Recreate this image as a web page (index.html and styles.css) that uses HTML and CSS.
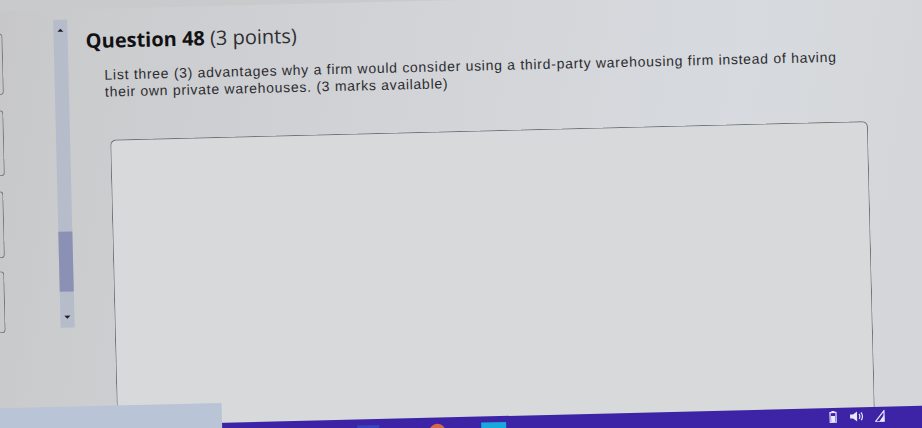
FILE: index.html
```html
<!DOCTYPE html>
<html lang="en">
<head>
<meta charset="utf-8">
<title>Question 48</title>
<link rel="stylesheet" href="styles.css">
</head>
<body>
<div class="screen">
  <div class="desk">
    <div class="cards">
      <div class="card c1"></div>
      <div class="card c2"></div>
      <div class="card c3"></div>
      <div class="card c4"></div>
    </div>
    <div class="scrollbar">
      <span class="arrow up"></span>
      <div class="track"><div class="thumb"></div></div>
      <span class="arrow down"></span>
    </div>
    <main class="question">
      <h1 class="q-title"><strong>Question 48</strong> <span class="pts">(3 points)</span></h1>
      <p class="q-text">List three (3) advantages why a firm would consider using a third-party warehousing firm instead of having their own private warehouses. (3 marks available)</p>
      <div class="answer"></div>
    </main>
  </div>
  <div class="taskbar">
    <div class="tb-apps">
      <span class="app a1"></span>
      <span class="app a2"></span>
      <span class="app a3"></span>
    </div>
    <div class="tray">
      <svg class="tray-icon" width="8" height="12" viewBox="0 0 8 12"><rect x="1" y="1.5" width="6" height="10" fill="none" stroke="#e8e8ff" stroke-width="1.2"/><rect x="2.5" y="0" width="3" height="1.5" fill="#e8e8ff"/><rect x="2" y="5" width="4" height="6" fill="#e8e8ff"/></svg>
      <svg class="tray-icon" width="14" height="12" viewBox="0 0 14 12"><path d="M1 4h3l4-3v10l-4-3H1z" fill="#e8e8ff"/><path d="M10 3.5c1 1.5 1 3.5 0 5M12 2c1.8 2.5 1.8 5.5 0 8" fill="none" stroke="#e8e8ff" stroke-width="1.2"/></svg>
      <svg class="tray-icon" width="10" height="12" viewBox="0 0 10 12"><path d="M9 1v11H0z" fill="none" stroke="#e8e8ff" stroke-width="1.2"/><path d="M9 5v7H4z" fill="#e8e8ff"/></svg>
    </div>
  </div>
  <div class="popup"></div>
</div>
</body>
</html>
```

FILE: styles.css
```css
html, body {
  margin: 0;
  padding: 0;
  width: 922px;
  height: 428px;
  overflow: hidden;
  background: #c9cacc;
}

.screen {
  position: relative;
  width: 960px;
  height: 480px;
  margin-left: -20px;
  padding-left: 20px;
  box-sizing: border-box;
  display: flex;
  flex-direction: column;
  transform: rotate(-1.4deg);
  transform-origin: 481px 214px;
  background: linear-gradient(100deg, #c6c6c7 0%, #cbccce 12%, #d2d4d8 45%, #d7dade 75%, #d3d5d8 100%);
}

.desk {
  height: 417px;
  display: flex;
  flex-direction: row;
  align-items: flex-start;
}

.cards {
  width: 4px;
  margin-left: -6px;
  display: flex;
  flex-direction: column;
  padding-top: 22px;
}

.card {
  border: 1px solid #77797c;
  border-left: none;
  border-radius: 0 4px 4px 0;
  box-sizing: border-box;
}
.c1 { height: 62px; width: 13px; }
.c2 { height: 66px; width: 12px; margin-top: 15px; }
.c3 { height: 67px; width: 10px; margin-top: 15px; }
.c4 { height: 62px; width: 9px; margin-top: 13px; }

.scrollbar {
  margin-left: 60px;
  margin-top: 10px;
  width: 17px;
  height: 308px;
  background: #b7bccb;
  display: flex;
  flex-direction: column;
  align-items: center;
}

.arrow {
  width: 0;
  height: 0;
  border-left: 3px solid transparent;
  border-right: 3px solid transparent;
}
.arrow.up {
  margin-top: 9px;
  border-bottom: 3px solid #1c1c2a;
}
.arrow.down {
  margin-bottom: 9px;
  border-top: 3px solid #1c1c2a;
}

.track {
  flex: 1;
  width: 100%;
  display: flex;
  flex-direction: column;
  justify-content: flex-start;
  align-items: flex-end;
}

.thumb {
  margin-top: 200px;
  width: 14px;
  height: 60px;
  background: #8b91b5;
}

.question {
  margin-left: 18px;
  flex: 1;
  align-self: stretch;
  display: flex;
  flex-direction: column;
  padding-right: 78px;
}

.q-title {
  margin: 20px 0 0 0;
  font-family: "Open Sans", "Liberation Sans", sans-serif;
  font-size: 20px;
  line-height: 24px;
  font-weight: 400;
  color: #2a2a2c;
}
.q-title strong {
  font-weight: 700;
  color: #111114;
}
.pts {
  color: #2e2e31;
}

.q-text {
  margin: 14px 0 0 18px;
  width: 750px;
  font-family: "Liberation Sans", Arial, sans-serif;
  font-size: 14px;
  letter-spacing: 0.72px;
  line-height: 17px;
  color: #2c2c30;
}

.answer {
  margin: 39px 0 0 22px;
  width: 758px;
  flex: 1;
  box-sizing: border-box;
  border: 1px solid #6f7479;
  border-bottom: none;
  border-radius: 6px 6px 0 0;
  background: #d8d9db;
}

.taskbar {
  height: 63px;
  background: #3d24a6;
  display: flex;
  flex-direction: row;
  align-items: flex-start;
  justify-content: space-between;
}

.tb-apps {
  display: flex;
  align-items: flex-start;
  gap: 40px;
  margin-left: 352px;
  padding-top: 6px;
}
.app {
  display: block;
  width: 24px;
  height: 18px;
}
.a1 { background: #3644c0; width: 22px; }
.a2 { background: #d56a4a; border-radius: 50%; width: 16px; height: 16px; margin-left: 10px; }
.a3 { background: #1aa7dd; width: 25px; margin-left: -4px; }

.tray {
  display: flex;
  align-items: flex-end;
  gap: 12px;
  margin-right: 60px;
  padding-top: 3px;
}
.tray-icon { display: block; }

.popup {
  position: absolute;
  left: 0;
  top: 397px;
  width: 237px;
  height: 60px;
  background: #b9c4d6;
}
```
